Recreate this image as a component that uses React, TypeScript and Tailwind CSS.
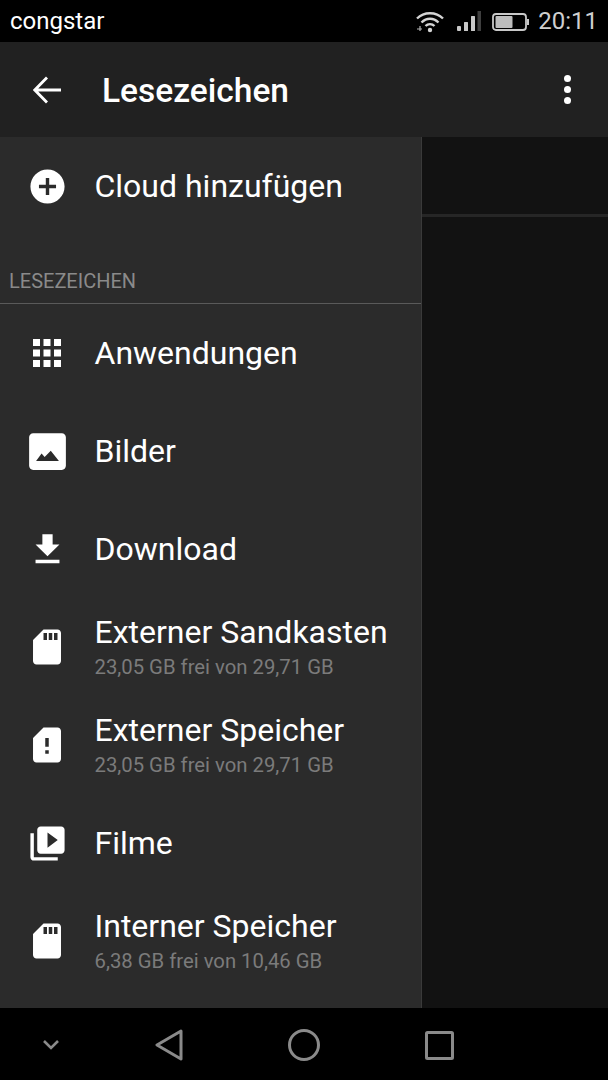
import React from 'react'

const paths = {
  add: 'M12 2C6.48 2 2 6.48 2 12s4.48 10 10 10 10-4.48 10-10S17.52 2 12 2zm5 11h-4v4h-2v-4H7v-2h4V7h2v4h4v2z',
  apps: 'M4 8h4V4H4v4zm6 12h4v-4h-4v4zm-6 0h4v-4H4v4zm0-6h4v-4H4v4zm6 0h4v-4h-4v4zm6-10v4h4V4h-4zm-6 4h4V4h-4v4zm6 6h4v-4h-4v4zm0 6h4v-4h-4v4z',
  image: 'M21 19V5c0-1.1-.9-2-2-2H5c-1.1 0-2 .9-2 2v14c0 1.1.9 2 2 2h14c1.1 0 2-.9 2-2zM6.4 16.7L9.1 13l1.5 1.7 3-3.1 4 5.1z',
  download: 'M19 9h-4V3H9v6H5l7 7 7-7zM5 18v2h14v-2H5z',
  sd: 'M18 2h-8L4.02 8 4 20c0 1.1.9 2 2 2h12c1.1 0 2-.9 2-2V4c0-1.1-.9-2-2-2zm-6 6h-2V4h2v4zm3 0h-2V4h2v4zm3 0h-2V4h2v4z',
  sdAlert: 'M18 2h-8L4.02 8 4 20c0 1.1.9 2 2 2h12c1.1 0 2-.9 2-2V4c0-1.1-.9-2-2-2zm-5 15h-2v-2h2v2zm0-4h-2V8h2v5z',
  video: 'M4 6H2v14c0 1.1.9 2 2 2h14v-2H4V6zm16-4H8c-1.1 0-2 .9-2 2v12c0 1.1.9 2 2 2h12c1.1 0 2-.9 2-2V4c0-1.1-.9-2-2-2zm-8 12.5v-9l6 4.5-6 4.5z',
}

function Icon({ d, className }: { d: string; className: string }) {
  return (
    <svg viewBox="0 0 24 24" className={className} fill="#ffffff" fillRule="evenodd">
      <path d={d} />
    </svg>
  )
}

const rows = [
  { icon: paths.apps, size: 'w-[42px] h-[42px]', title: 'Anwendungen' },
  { icon: paths.image, size: 'w-[49px] h-[49px]', title: 'Bilder' },
  { icon: paths.download, size: 'w-[41px] h-[41px]', title: 'Download' },
  { icon: paths.sd, size: 'w-[42px] h-[42px]', title: 'Externer Sandkasten', sub: '23,05 GB frei von 29,71 GB' },
  { icon: paths.sdAlert, size: 'w-[42px] h-[42px]', title: 'Externer Speicher', sub: '23,05 GB frei von 29,71 GB' },
  { icon: paths.video, size: 'w-[41px] h-[41px]', title: 'Filme' },
  { icon: paths.sd, size: 'w-[42px] h-[42px]', title: 'Interner Speicher', sub: '6,38 GB frei von 10,46 GB' },
]

function StatusBar() {
  return (
    <div className="h-[42px] shrink-0 bg-black flex items-center justify-between pl-[10px] pr-[10px]">
      <span className="text-[24px] leading-none text-white">congstar</span>
      <div className="flex items-center">
        <svg width="30" height="24" viewBox="0 0 30 24" fill="none" stroke="#d4d4d4" strokeWidth="2.4">
          <path d="M2 9.5C9 2.5 21 2.5 28 9.5" />
          <path d="M6.5 13.5C11.5 8.5 18.5 8.5 23.5 13.5" />
          <path d="M10.5 17C13 14.5 17 14.5 19.5 17" />
          <circle cx="15" cy="21" r="2.2" fill="#d4d4d4" stroke="none" />
          <path d="M5 17v5M2 20h5" strokeWidth="1.2" stroke="#b5b5b5" />
        </svg>
        <svg className="ml-[12px]" width="25" height="24" viewBox="0 0 25 24" fill="#c8c8c8">
          <rect x="0" y="17" width="4" height="5" rx="1" />
          <rect x="7" y="13" width="4" height="9" rx="0.5" />
          <rect x="14" y="7" width="4" height="15" rx="0.5" />
          <rect x="20.5" y="2" width="3.5" height="20" fill="#3f3f3f" />
        </svg>
        <svg className="ml-[10px]" width="38" height="20" viewBox="0 0 38 20" fill="none">
          <rect x="1" y="3" width="33" height="16" rx="3" stroke="#c8c8c8" strokeWidth="1.8" />
          <rect x="3.5" y="5" width="17" height="12" rx="1" fill="#bdbdbd" />
          <path d="M36 8v6" stroke="#c8c8c8" strokeWidth="2" />
        </svg>
        <span className="ml-[8px] text-[24px] leading-none text-[#cfcfcf]">20:11</span>
      </div>
    </div>
  )
}

function Header() {
  return (
    <div className="h-[95px] shrink-0 bg-[#212121] flex items-center pl-[33px] pr-[37px]">
      <svg width="28" height="28" viewBox="0 0 28 28" fill="none" stroke="#ffffff" strokeWidth="2.8">
        <path d="M28 14H2M14 1.5L1.8 14L14 26.5" />
      </svg>
      <h1 className="ml-[41px] mt-[2px] text-[33.5px] font-medium text-white leading-none">Lesezeichen</h1>
      <div className="ml-auto flex flex-col gap-[4px]">
        <span className="w-[7px] h-[7px] rounded-full bg-white" />
        <span className="w-[7px] h-[7px] rounded-full bg-white" />
        <span className="w-[7px] h-[7px] rounded-full bg-white" />
      </div>
    </div>
  )
}

function Row({ icon, size, title, sub }: { icon: string; size: string; title: string; sub?: string }) {
  return (
    <div className="h-[98px] shrink-0 flex items-center">
      <div className="w-[95px] shrink-0 flex justify-center pr-[1px]">
        <Icon d={icon} className={size} />
      </div>
      <div className="min-w-0 -ml-[0.5px]">
        <div className="text-[32px] leading-[36px] text-white whitespace-nowrap">{title}</div>
        {sub && <div className="mt-[4px] text-[20.3px] leading-[26px] text-[#7b7b7b] whitespace-nowrap">{sub}</div>}
      </div>
    </div>
  )
}

function BottomNav() {
  return (
    <div className="h-[72px] shrink-0 bg-black flex items-center pl-[43px] pt-[2px]">
      <svg width="16" height="10" viewBox="0 0 16 10" fill="none" stroke="#8a8a8a" strokeWidth="2.6">
        <path d="M1 1l7 7 7-7" />
      </svg>
      <svg className="ml-[96px]" width="28" height="32" viewBox="0 0 28 32" fill="none" stroke="#8a8a8a" strokeWidth="3" strokeLinejoin="round">
        <path d="M26 2L2 16L26 30Z" />
      </svg>
      <svg className="ml-[105px]" width="32" height="32" viewBox="0 0 32 32" fill="none" stroke="#8a8a8a" strokeWidth="3">
        <circle cx="16" cy="16" r="14.5" />
      </svg>
      <svg className="ml-[105px]" width="29" height="29" viewBox="0 0 29 29" fill="none" stroke="#8a8a8a" strokeWidth="3" strokeLinejoin="round">
        <rect x="1.5" y="1.5" width="26" height="26" rx="1" />
      </svg>
    </div>
  )
}

export default function App() {
  return (
    <div className="w-[608px] h-[1080px] flex flex-col overflow-hidden bg-black font-['Roboto',sans-serif]">
      <StatusBar />
      <Header />
      <div className="flex-1 min-h-0 flex">
        <div className="w-[421px] shrink-0 bg-[#2b2b2b] flex flex-col overflow-hidden">
          <div className="h-[98px] shrink-0 flex items-center">
            <div className="w-[95px] shrink-0 flex justify-center pr-[1px]">
              <Icon d={paths.add} className="w-[41px] h-[41px]" />
            </div>
            <span className="-ml-[0.5px] text-[32px] text-white leading-none">Cloud hinzufügen</span>
          </div>
          <div className="h-[69px] shrink-0 flex items-end pl-[9px] pb-[12px] border-b border-[#5a5a5a]">
            <span className="text-[20px] leading-none text-[#8a8a8a]">LESEZEICHEN</span>
          </div>
          {rows.map((r) => (
            <Row key={r.title} {...r} />
          ))}
        </div>
        <div className="flex-1 bg-[#121212] border-l border-[#3a3a3a]">
          <div className="h-[80px] border-b-[3px] border-[#262626]" />
        </div>
      </div>
      <BottomNav />
    </div>
  )
}
